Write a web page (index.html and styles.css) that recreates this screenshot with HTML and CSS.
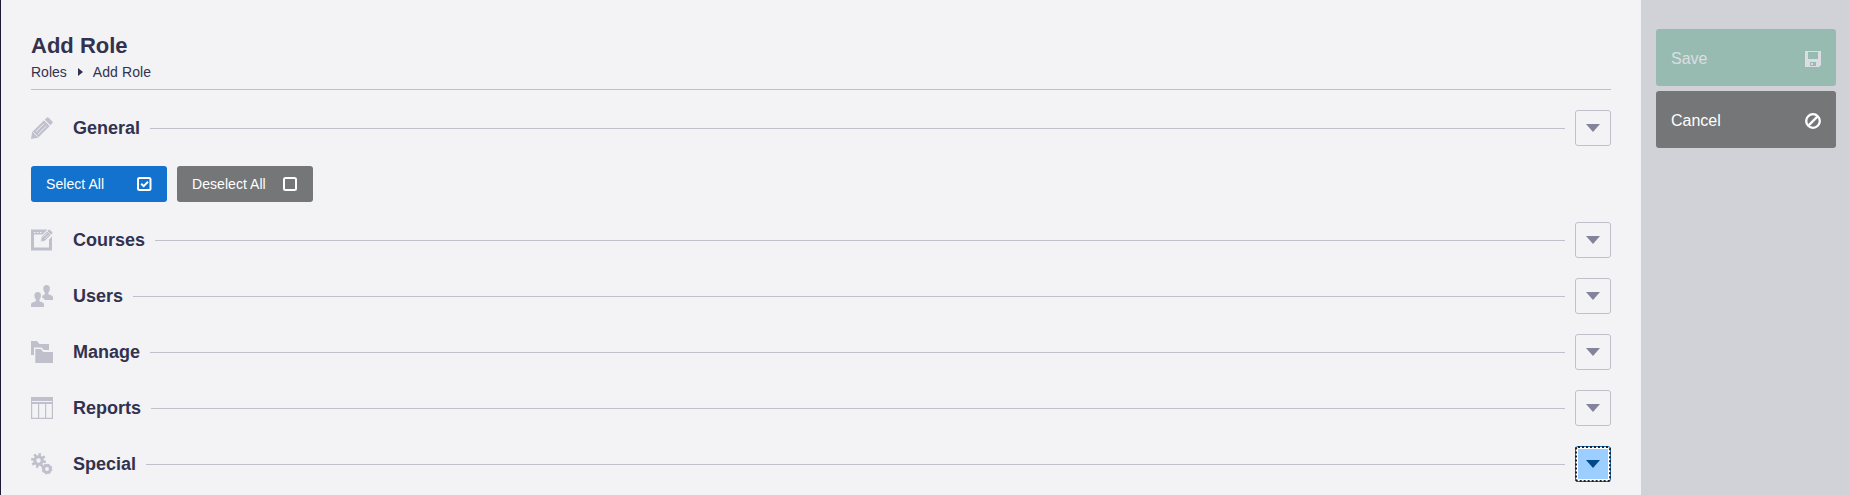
FILE: index.html
```html
<!DOCTYPE html>
<html lang="en">
<head>
    <meta charset="UTF-8">
    <title>Add Role</title>
    <link rel="stylesheet" href="styles.css">
</head>
<body>
    <main>
        <header>
            <h1>Add Role</h1>
            <nav class="breadcrumb">
                <a>Roles</a>
                <svg width="5" height="8" viewBox="0 0 5 8"><path d="M0 0L5 4L0 8Z" /></svg>
                <span>Add Role</span>
            </nav>
        </header>

        <section>
            <div class="row">
                <svg class="icon" viewBox="0 0 22 22">
                    <path d="M13.7 2.8L16 .5Q16.7-.2 17.5.5L21.4 4.4Q22.2 5.2 21.5 6L19.2 8.3Z" />
                    <path d="M13 3.2L18.8 9L7 20.8L0 22L1.2 15Z" />
                    <path class="cut" d="M13 6.7L4.8 14.9M15.3 9L7.1 17.2M2.2 15.2L6.8 19.8M13 2.6L19.4 9" />
                </svg>
                <h2>General</h2>
                <hr>
                <button class="toggle"><svg width="14" height="8" viewBox="0 0 14 8"><path d="M0 0H14L7 8Z" /></svg></button>
            </div>
            <div class="actions">
                <button class="btn blue">Select All
                    <svg width="15" height="14" viewBox="0 0 15 14"><rect x="1" y="1" width="12.5" height="12" rx="1.5" /><path d="M4.2 6.7L6.7 9.2L11 4.8" /></svg>
                </button>
                <button class="btn gray">Deselect All
                    <svg width="15" height="14" viewBox="0 0 15 14"><rect x="1" y="1" width="12" height="12" rx="1.5" /></svg>
                </button>
            </div>
        </section>

        <section class="row">
            <svg class="icon" viewBox="0 0 22 22">
                <path fill-rule="evenodd" d="M0 .5H16.5L11.5 5.5H3V18.5H18V10.5L21 7.5V21.5H0Z" />
                <path class="dots" d="M3 3.5H4.5M6 3.5H7.5M9 3.5H10.5" />
                <path class="edge" d="M17.5.5Q18.3-.1 19 .5L21.5 3Q22.1 3.7 21.5 4.5L14 12L9.5 13L10.4 8Z" />
                <path class="cut thin" d="M16.3 4L12.2 8.1M18 5.7L13.9 9.8M15.9 1.9L20.2 6.2" />
            </svg>
            <h2>Courses</h2>
            <hr>
            <button class="toggle"><svg width="14" height="8" viewBox="0 0 14 8"><path d="M0 0H14L7 8Z" /></svg></button>
        </section>

        <section class="row">
            <svg class="icon" viewBox="0 0 22 22">
                <path d="M12.3 3.5Q12.2 0 15.6 0T18.9 3.5Q18.9 6.2 17.4 7.5V9.2L20.7 10.6Q22 11.2 22 12.5V15H13.8Q13.3 13.6 11.2 12.8V10.8L13.8 9.2V7.5Q12.3 6 12.3 3.5Z" />
                <path d="M3.4 10.5Q3.3 7 6.7 7T10 10.5Q10 13.2 8.5 14.5V16.2L11.8 17.6Q13 18.2 13 19.5V22H0V19.5Q0 18.2 1.4 17.6L4.9 16.2V14.5Q3.4 13 3.4 10.5Z" />
            </svg>
            <h2>Users</h2>
            <hr>
            <button class="toggle"><svg width="14" height="8" viewBox="0 0 14 8"><path d="M0 0H14L7 8Z" /></svg></button>
        </section>

        <section class="row">
            <svg class="icon" viewBox="0 0 22 22">
                <path d="M0 0H6L8.5 3H18V9H13L10.5 6.5H3V14H0Z" />
                <path d="M4.3 8H9.8L12.3 11H22V22H4.3Z" />
            </svg>
            <h2>Manage</h2>
            <hr>
            <button class="toggle"><svg width="14" height="8" viewBox="0 0 14 8"><path d="M0 0H14L7 8Z" /></svg></button>
        </section>

        <section class="row">
            <svg class="icon" viewBox="0 0 22 22">
                <path fill-rule="evenodd" d="M0 0H22V22H0ZM1 4V5H21V4ZM1.2 7V20.8H7V7ZM8.2 7V20.8H14V7ZM15.2 7V20.8H20.8V7Z" />
            </svg>
            <h2>Reports</h2>
            <hr>
            <button class="toggle"><svg width="14" height="8" viewBox="0 0 14 8"><path d="M0 0H14L7 8Z" /></svg></button>
        </section>

        <section class="row">
            <svg class="icon" viewBox="0 0 22 22">
                <circle class="ring" cx="7.5" cy="7.5" r="3.7" />
                <path class="teeth" d="M7.5 0V3.5M7.5 11.5V15M0 7.5H3.5M11.5 7.5H15M2.2 2.2L4.7 4.7M10.3 10.3L12.8 12.8M2.2 12.8L4.7 10.3M10.3 4.7L12.8 2.2" transform="rotate(12 7.5 7.5)" />
                <circle class="ring" cx="16" cy="16" r="3.4" />
                <circle class="teeth small" cx="16" cy="16" r="4.8" stroke-dasharray="1.9 1.87" />
            </svg>
            <h2>Special</h2>
            <hr>
            <button class="toggle active"><svg width="14" height="8" viewBox="0 0 14 8"><path d="M0 0H14L7 8Z" /></svg></button>
        </section>
    </main>

    <aside>
        <button class="save" disabled>Save
            <svg width="16" height="16" viewBox="0 0 16 16"><path fill-rule="evenodd" d="M0 0H16V14L14 16H0ZM3 1V8H13V1ZM5 11V15H11V11ZM6 12H8V14H6Z" /></svg>
        </button>
        <button class="cancel">Cancel
            <svg width="16" height="16" viewBox="0 0 16 16"><circle cx="8" cy="8" r="6.8" /><path d="M3.4 12.6L12.6 3.4" /></svg>
        </button>
    </aside>
</body>
</html>
```
FILE: styles.css
```css
* {
    box-sizing: border-box;
}
body {
    margin: 0;
    display: flex;
    height: 495px;
    overflow: hidden;
    font-family: "Liberation Sans", Arial, sans-serif;
    font-size: 14px;
    color: #32324e;
    background-color: #d1d2d8;
}
main {
    flex: none;
    width: 1641px;
    padding: 33px 30px 0;
    border-left: 1px solid #1b1b33;
    background-color: #f3f3f6;
}
header {
    height: 57px;
    border-bottom: 1px solid #c0c0cc;
    margin-bottom: 20px;
}
h1 {
    margin: 0;
    font-size: 22px;
    line-height: 25px;
}
.breadcrumb {
    display: flex;
    align-items: center;
    line-height: 16px;
    margin-top: 6px;
}
.breadcrumb svg {
    margin: 0 10px 0 11px;
    fill: #32324e;
}
.breadcrumb span {
    letter-spacing: 0.1px;
}
.row {
    display: flex;
    align-items: center;
    height: 36px;
    margin-bottom: 20px;
}
.icon {
    width: 22px;
    height: 22px;
    margin-right: 20px;
    fill: #c0c0cc;
}
.cut {
    stroke: #f3f3f6;
    stroke-width: 0.9;
    fill: none;
}
.thin {
    stroke-width: 0.7;
}
.dots {
    stroke: #f3f3f6;
    stroke-width: 1;
}
.edge {
    stroke: #f3f3f6;
    stroke-width: 0.7;
}
.ring {
    fill: none;
    stroke: #c0c0cc;
    stroke-width: 3;
}
.teeth {
    fill: none;
    stroke: #c0c0cc;
    stroke-width: 2.6;
}
.small {
    stroke-width: 1.2;
}
h2 {
    margin: 0;
    font-size: 18px;
    line-height: 20px;
}
hr {
    flex: 1;
    height: 1px;
    margin: 1px 10px 0;
    border: 0;
    background-color: #c0c0cc;
}
button {
    display: flex;
    align-items: center;
    justify-content: space-between;
    font-family: inherit;
    color: white;
    border: 0;
    border-radius: 3px;
}
.toggle {
    width: 36px;
    height: 36px;
    padding: 0;
    justify-content: center;
    border: 1px solid #c0c0cc;
    background-color: transparent;
    fill: #83839c;
}
.toggle.active {
    border: 1px solid #1272cd;
    outline: 2px dotted #222;
    outline-offset: -2px;
    box-shadow: inset 0 0 0 2px white;
    background-color: #9ccfff;
    fill: #004a8c;
}
.actions {
    display: flex;
    gap: 10px;
    margin-bottom: 20px;
}
.btn {
    width: 136px;
    height: 36px;
    padding: 0 15px;
    font-size: 14px;
    letter-spacing: 0.05px;
}
.btn svg, .cancel svg {
    fill: none;
    stroke: white;
    stroke-width: 2;
}
.blue {
    background-color: #1272cd;
}
.gray, .cancel {
    background-color: #757678;
}
aside {
    flex: none;
    display: flex;
    flex-direction: column;
    gap: 5px;
    padding: 29px 14px 0 15px;
}
aside button {
    width: 180px;
    height: 57px;
    padding: 2px 15px 0;
    font-size: 16px;
    line-height: 19px;
}
.save {
    color: #dbdee1;
    fill: #dcdde2;
    background-color: #98bbb1;
}
.cancel svg {
    stroke-width: 2.3;
}
```
